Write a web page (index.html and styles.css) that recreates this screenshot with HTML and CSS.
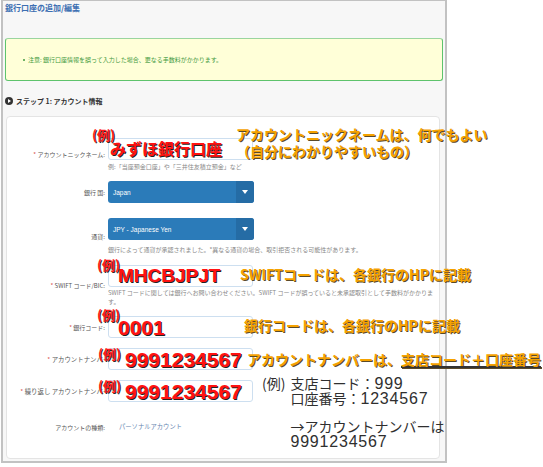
FILE: index.html
```html
<!DOCTYPE html>
<html lang="ja">
<head>
<meta charset="utf-8">
<title>銀行口座の追加/編集</title>
<link rel="stylesheet" href="styles.css">
</head>
<body>
<div class="frame">
  <h1 class="title">銀行口座の追加/編集</h1>
  <div class="notice">
    <ul><li>注意: 銀行口座情報を誤って入力した場合、更なる手数料がかかります。</li></ul>
  </div>
  <h2 class="step"><span class="step-icon"></span>ステップ 1: アカウント情報</h2>
  <div class="card">
    <div class="row row-nick">
      <div class="label"><span class="req">*</span> アカウントニックネーム:</div>
      <div class="field">
        <div class="input">
          <span class="ex ex-nick">(例)</span>
          <span class="val val-nick">みずほ銀行口座</span>
          <span class="note note-nick">アカウントニックネームは、何でもよい<br>（自分にわかりやすいもの）</span>
        </div>
        <p class="hint">例:「当座預金口座」や「三井住友積立預金」など</p>
      </div>
    </div>
    <div class="row row-country">
      <div class="label">銀行 国:</div>
      <div class="field">
        <div class="select"><span class="select-text">Japan</span><span class="select-arrow"></span></div>
      </div>
    </div>
    <div class="row row-currency">
      <div class="label">通貨:</div>
      <div class="field">
        <div class="select"><span class="select-text">JPY - Japanese Yen</span><span class="select-arrow"></span></div>
        <p class="hint hint-currency">銀行によって通貨が承認されました。*異なる通貨の場合、取引拒否される可能性があります。</p>
      </div>
    </div>
    <div class="row row-swift">
      <div class="label"><span class="req">*</span> SWIFT コード/BIC:</div>
      <div class="field">
        <div class="input">
          <span class="ex ex-swift">(例)</span>
          <span class="val val-swift">MHCBJPJT</span>
          <span class="note note-swift">SWIFTコードは、各銀行のHPに記載</span>
        </div>
        <p class="hint hint-swift">SWIFT コードに関しては銀行へお問い合わせください。SWIFT コードが誤っていると未承認取引として手数料がかかります。</p>
      </div>
    </div>
    <div class="row row-bank">
      <div class="label"><span class="req">*</span> 銀行コード:</div>
      <div class="field">
        <div class="input">
          <span class="ex ex-bank">(例)</span>
          <span class="val val-bank">0001</span>
          <span class="note note-bank">銀行コードは、各銀行のHPに記載</span>
        </div>
      </div>
    </div>
    <div class="row row-acct">
      <div class="label label-long"><span class="req">*</span> アカウントナンバー:</div>
      <div class="field">
        <div class="input">
          <span class="ex ex-acct">(例)</span>
          <span class="val val-acct">9991234567</span>
          <span class="note note-acct">アカウントナンバーは、<span class="under">支店コード＋口座番号</span></span>
        </div>
      </div>
    </div>
    <div class="row row-repeat">
      <div class="label label-long"><span class="req">*</span> 繰り返し アカウントナンバー:</div>
      <div class="field">
        <div class="input">
          <span class="ex ex-acct">(例)</span>
          <span class="val val-acct">9991234567</span>
          <div class="explain">
            <span class="explain-ex">(例)</span>
            <div class="explain-lines">
              <p>支店コード：<span class="num">999</span></p>
              <p>口座番号：<span class="num">1234567</span></p>
              <p class="blank"></p>
              <p>→アカウントナンバーは</p>
              <p><span class="num">9991234567</span></p>
            </div>
          </div>
        </div>
      </div>
    </div>
    <div class="row row-type">
      <div class="label">アカウントの種類:</div>
      <div class="field">
        <p class="type-value">パーソナルアカウント</p>
      </div>
    </div>
  </div>
</div>
</body>
</html>
```

FILE: styles.css
```css
* {
  box-sizing: border-box;
  margin: 0;
  padding: 0;
}

html, body {
  background: #ffffff;
}

body {
  font-family: "Noto Sans CJK JP", "Liberation Sans", sans-serif;
  color: #444;
  width: 543px;
  height: 467px;
  overflow: hidden;
}

.frame {
  width: 446px;
  height: 463px;
  margin-left: 1px;
  border: 2px solid #c2c2c2;
  border-top-width: 1px;
  background: #f7f7f7;
}

.title {
  font-size: 8px;
  line-height: 12px;
  font-weight: bold;
  color: #3d6fb2;
  padding-left: 2px;
  margin-top: 1px;
}

.notice {
  margin: 24px 2px 0 2px;
  height: 43px;
  background: #ffffd8;
  border: 1px solid #5ec36c;
  border-top-color: #9ad59e;
  border-radius: 3px;
  display: flex;
  align-items: center;
  padding-left: 22px;
}

.notice ul {
  list-style: none;
}

.notice li {
  font-size: 6px;
  line-height: 8px;
  color: #3f9a3f;
  position: relative;
}

.notice li::before {
  content: "";
  position: absolute;
  left: -5px;
  top: 3px;
  width: 2px;
  height: 2px;
  border-radius: 50%;
  background: #3f9a3f;
}

.step {
  margin-top: 14px;
  padding-left: 2px;
  font-size: 7px;
  line-height: 12px;
  font-weight: bold;
  color: #333;
  display: flex;
  align-items: center;
}

.step-icon {
  width: 8px;
  height: 8px;
  border-radius: 50%;
  background: #333;
  margin-right: 3px;
  display: flex;
  align-items: center;
  justify-content: center;
}

.step-icon::after {
  content: "";
  border-left: 3px solid #fff;
  border-top: 2px solid transparent;
  border-bottom: 2px solid transparent;
  margin-left: 1px;
}

.card {
  margin: 9px 5px 0 3px;
  height: 343px;
  background: #ffffff;
  border: 1px solid #e4e4e4;
  border-radius: 4px;
  padding-top: 21px;
}

.row {
  display: flex;
  align-items: center;
  margin-top: 10px;
}

.row-nick { margin-top: 0; }
.row-currency { margin-top: 15px; }
.row-swift { margin-top: 11px; }
.row-type { margin-top: 19px; }

.label {
  width: 98px;
  flex: none;
  text-align: right;
  font-size: 6px;
  line-height: 9px;
  color: #555;
  white-space: nowrap;
  margin-right: 3px;
}

.label-long {
  margin-right: -3px;
  width: 104px;
  font-size: 6.4px;
}

.req {
  color: #d9534f;
}

.field {
  flex: none;
  width: 331px;
  position: relative;
}

.input {
  position: relative;
  width: 145px;
  height: 22px;
  background: #fff;
  border: 1px solid #cddff0;
  border-radius: 3px;
}

.hint {
  font-size: 6px;
  line-height: 9px;
  color: #888;
  margin-top: 2px;
}

.hint-currency { margin-top: 5px; }
.hint-swift { margin-top: 1px; }

.select {
  width: 146px;
  height: 22px;
  background: #2b7bb9;
  border-radius: 3px;
  display: flex;
  align-items: center;
  color: #fff;
  overflow: hidden;
}

.select-text {
  flex: 1;
  font-family: "Liberation Sans", sans-serif;
  font-size: 6.5px;
  padding-left: 5px;
}

.select-arrow {
  width: 18px;
  height: 22px;
  background: #256ca5;
  display: flex;
  align-items: center;
  justify-content: center;
}

.select-arrow::after {
  content: "";
  border-top: 4px solid #fff;
  border-left: 3px solid transparent;
  border-right: 3px solid transparent;
}

/* annotations drawn over the form */
.ex, .val, .note, .explain {
  position: absolute;
  white-space: nowrap;
}

.ex {
  font-size: 13px;
  line-height: 13px;
  font-weight: bold;
  color: #ff1a1a;
  text-shadow: 1px 1px 0 #2a2a2a;
}

.ex-nick { left: -17px; top: -11px; }
.ex-swift { left: -12px; top: -8px; }
.ex-bank { left: -12px; top: -9px; }
.ex-acct { left: -11px; top: -2px; }

.val {
  font-weight: bold;
  color: #ff1212;
  text-shadow: 1px 1px 0 #222;
}

.val-nick {
  font-size: 16px;
  line-height: 16px;
  left: 1px;
  top: 1px;
}

.val-swift, .val-bank, .val-acct {
  font-family: "Liberation Sans", sans-serif;
  font-size: 21px;
  line-height: 21px;
}

.val-swift { font-size: 19px; line-height: 19px; left: 9px; top: 0; }
.val-bank { left: 9px; top: 0; }
.val-acct { left: 16px; top: 0; }

.note {
  font-size: 14px;
  line-height: 17px;
  font-weight: bold;
  color: #f5a200;
  text-shadow: 1px 1px 0 #5a4a2a;
}

.note-nick { left: 127px; top: -13px; }
.note-swift { left: 131px; top: 0; }
.note-bank { left: 135px; top: 0; }
.note-acct { left: 138px; top: 2px; }

.under {
  text-decoration: underline;
  text-decoration-color: #333;
  text-decoration-thickness: 2px;
  text-underline-offset: 1px;
}

.explain {
  left: 153px;
  top: -5px;
  display: flex;
  font-size: 14px;
  line-height: 15px;
  color: #2f2f2f;
}

.explain-ex {
  margin-right: 5px;
}

.explain-lines .blank {
  height: 13px;
}

.num {
  font-family: "Liberation Sans", sans-serif;
  font-size: 16px;
  letter-spacing: 0.8px;
}

.type-value {
  font-size: 6.3px;
  line-height: 12px;
  color: #6685b0;
  padding-left: 11px;
}
```
